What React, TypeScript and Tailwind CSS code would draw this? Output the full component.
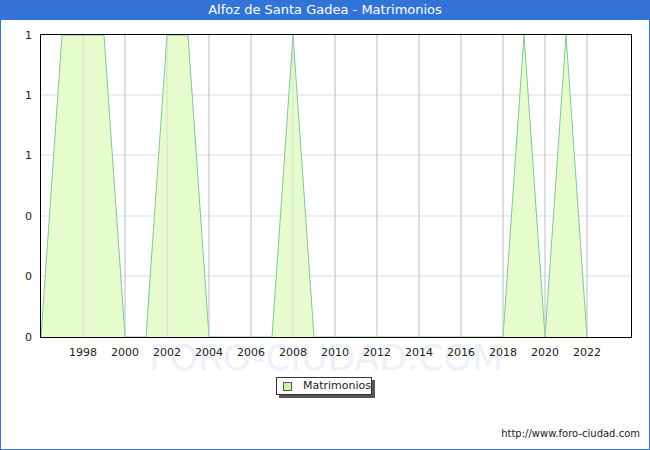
export default function App() {
  const x0 = 40, step = 21, yTop = 15, yBot = 317;
  const data: [number, number][] = [
    [1996,0],[1997,1],[1999,1],[2000,0],[2001,0],[2002,1],[2003,1],[2004,0],
    [2007,0],[2008,1],[2009,0],[2018,0],[2019,1],[2020,0],[2021,1],[2022,0],
  ];
  const px = (y: number) => x0 + (y - 1996) * step;
  const py = (v: number) => (v ? yTop : yBot);
  const line = data.map(([y, v]) => `${px(y)},${py(v)}`).join(" ");
  const poly = `${px(1996)},${yBot} ${line} ${px(2022)},${yBot}`;
  const years = [1998,2000,2002,2004,2006,2008,2010,2012,2014,2016,2018,2020,2022];
  const ys = [15, 75, 135, 196, 256, 317];
  const ylab = ["1","1","1","0","0","0"];
  return (
    <div className="w-[650px] h-[450px] bg-[#3373d6] flex flex-col" style={{ fontFamily: "'DejaVu Sans', sans-serif" }}>
      <div className="h-[20px] flex items-center justify-center text-white text-[13px]">Alfoz de Santa Gadea - Matrimonios</div>
      <div className="flex-1 mx-[1px] mb-[1px] bg-white relative">
        <svg width="648" height="429" className="block">
          <text x="325" y="350" textAnchor="middle" fontSize="36" fill="#eef0fa" fontFamily="DejaVu Sans">FORO-CIUDAD.COM</text>
          {ys.slice(1, 5).map((y) => (<line key={y} x1={x0} x2={630} y1={y} y2={y} stroke="#dddddd" />))}
          {years.map((y) => (<line key={y} x1={px(y)} x2={px(y)} y1={yTop} y2={yBot} stroke="#cccccc" />))}
          <polygon points={poly} fill="#e6fccc" />
          <polyline points={line} fill="none" stroke="#7ec897" strokeWidth="1" />
          {years.map((y) => (<line key={"g"+y} x1={px(y)} x2={px(y)} y1={yTop} y2={yBot} stroke="#cccccc" strokeOpacity="0.6" />))}
          <rect x={x0 - 0.5} y={yTop - 0.5} width={591} height={yBot - yTop + 1} fill="none" stroke="#000" />
          {ys.map((y, i) => (<text key={i} x="31" y={y + 4} textAnchor="end" fontSize="11" fill="#222">{ylab[i]}</text>))}
          {years.map((y) => (<text key={"t"+y} x={px(y)} y="336" textAnchor="middle" fontSize="11" fill="#222">{y}</text>))}
        </svg>
        <div className="absolute left-[275px] top-[357px] w-[96px] h-[18px] border border-[#333] bg-white shadow-[3px_3px_0_#555] flex items-center gap-[6px] pl-[6px] text-[11px] text-[#222]">
          <span className="w-[9px] h-[9px] border border-[#555] bg-[#ccf5a0]" />
          <span className="ml-[5px]">Matrimonios</span>
        </div>
        <div className="absolute right-[9px] top-[406px] text-[10px] text-[#222]">http://www.foro-ciudad.com</div>
      </div>
    </div>
  );
}
